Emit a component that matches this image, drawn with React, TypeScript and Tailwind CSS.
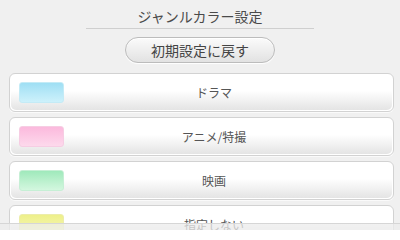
const genres = [
  { name: 'ドラマ', swatch: 'from-[#9fdff4] to-[#cdf1fb] border-[#c4ebf6]' },
  { name: 'アニメ/特撮', swatch: 'from-[#fbb9dd] to-[#fdd9ec] border-[#f6cde3]' },
  { name: '映画', swatch: 'from-[#9fe9bb] to-[#d3f7df] border-[#c6efd5]' },
  { name: '指定しない', swatch: 'from-[#eef08a] to-[#f6f7b8] border-[#ecedaa]' },
];

function GenreRow({ name, swatch }: { name: string; swatch: string }) {
  return (
    <div className="h-[39px] rounded-[6px] border border-[#d2d2d2] bg-white p-px shadow-[0_1px_0_#fafafa]">
      <div className="flex h-full items-center rounded-[5px] bg-gradient-to-b from-white from-45% to-[#e4e4e4] pl-[8px]">
        <div className={`h-[21px] w-[45px] rounded-[3px] border bg-gradient-to-b ${swatch}`} />
        <span className="mr-[28px] flex-1 text-center text-[12px] text-[#555]">{name}</span>
      </div>
    </div>
  );
}

export default function App() {
  return (
    <div
      className="relative h-[230px] overflow-hidden bg-[#f0f0f0]"
      style={{ fontFamily: '"Noto Sans CJK JP", "Noto Sans", sans-serif' }}
    >
      <div className="flex flex-col items-center pt-[6px]">
        <h1 className="h-[20px] text-[14px] leading-[20px] text-[#4a4a4a]">ジャンルカラー設定</h1>
        <div className="mt-[2px] h-px w-[228px] bg-[#cfcfcf]" />
        <button className="mt-[8px] flex h-[26px] w-[150px] items-center justify-center rounded-full border border-[#bcbcbc] bg-gradient-to-b from-[#fbfbfb] to-[#e2e2e2] text-[14px] text-[#444] shadow-[inset_0_1px_0_#fff,0_1px_1px_#fff]">
          初期設定に戻す
        </button>
      </div>

      <div className="mt-[10px] flex flex-col gap-[5px] pl-[9px] pr-[6px]">
        {genres.map((g) => (
          <GenreRow key={g.name} name={g.name} swatch={g.swatch} />
        ))}
      </div>

      {/* bottom bar overlay */}
      <div className="absolute inset-x-0 bottom-0 h-[7px] border-t border-[#d6d6d6] bg-[#ececec]/75" />
    </div>
  );
}
